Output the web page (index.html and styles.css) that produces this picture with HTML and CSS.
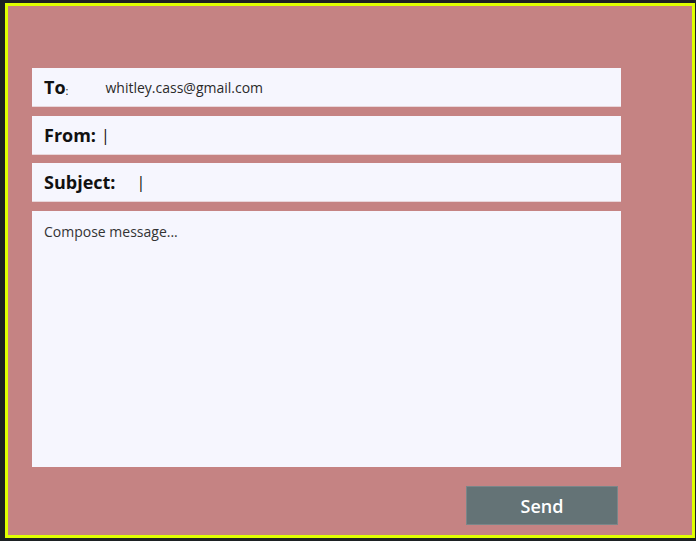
FILE: index.html
```html
<!DOCTYPE html>
<html>
<head>
<meta charset="utf-8">
<link rel="stylesheet" href="styles.css">
</head>
<body>
<div class="frame">
  <form class="mail">
    <div class="field">
      <span class="label">To</span><span class="colon">:</span>
      <span class="value email">whitley.cass@gmail.com</span>
    </div>
    <div class="field gap8">
      <span class="label">From:</span>
      <span class="cursor from-cursor">|</span>
    </div>
    <div class="field">
      <span class="label">Subject:</span>
      <span class="cursor subject-cursor">|</span>
    </div>
    <div class="message">Compose message...</div>
    <div class="actions">
      <button type="button" class="send">Send</button>
    </div>
  </form>
</div>
</body>
</html>
```
FILE: styles.css
```css
html, body {
  margin: 0;
  padding: 0;
}
body {
  background: #1c2123;
  width: 696px;
  height: 541px;
  overflow: hidden;
  font-family: "Open Sans", "Noto Sans", sans-serif;
}
.frame {
  box-sizing: border-box;
  margin: 3px 1px 0 5px;
  width: 690px;
  height: 535px;
  border: 3px solid #dfff00;
  background: #c58383;
  padding: 62px 71px 0 24px;
}
.mail {
  display: flex;
  flex-direction: column;
}
.field {
  box-sizing: border-box;
  height: 39px;
  background: #f6f6fe;
  border-bottom: 1px solid #e8d6da;
  display: flex;
  align-items: center;
  padding: 0 12px;
  margin-bottom: 9px;
  color: #111;
}
.field.gap8 {
  margin-bottom: 8px;
}
.label {
  font-size: 18px;
  font-weight: 700;
}
.colon {
  font-size: 11px;
  margin-top: 6px;
}
.email {
  font-size: 14px;
  color: #2a2a2a;
  margin-left: 37px;
}
.cursor {
  font-size: 16px;
  font-weight: 400;
  color: #111;
}
.from-cursor {
  margin-left: 5px;
}
.subject-cursor {
  margin-left: 21px;
}
.message {
  box-sizing: border-box;
  height: 256px;
  background: #f6f6fe;
  padding: 11px 12px;
  font-size: 14px;
  color: #333;
}
.actions {
  display: flex;
  justify-content: flex-end;
  padding-top: 19px;
  padding-right: 3px;
}
.send {
  width: 152px;
  height: 39px;
  background: #647376;
  border: 1px solid #7a8689;
  color: #fff;
  font-family: inherit;
  font-size: 18px;
  font-weight: 600;
  padding: 0;
}
```
